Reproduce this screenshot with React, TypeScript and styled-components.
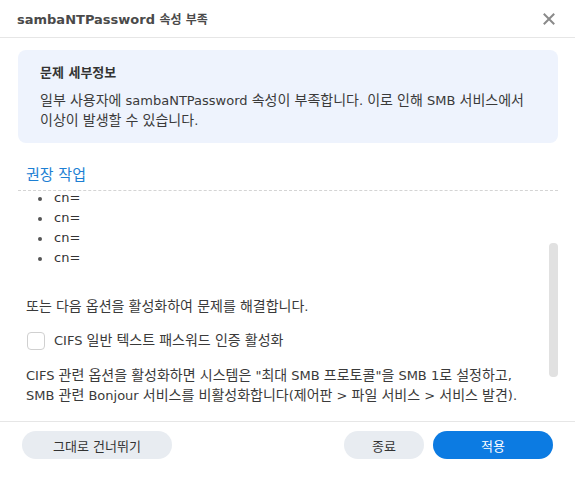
import type { FC, ReactNode } from 'react'
import styled, { createGlobalStyle } from 'styled-components'

const GlobalStyle = createGlobalStyle`
  html, body {
    margin: 0;
    padding: 0;
    background: #fff;
  }
  body {
    font-family: 'DejaVu Sans', 'Noto Sans CJK KR', sans-serif;
    font-size: 13px;
    color: #333;
  }
`

// hangul runs render a touch wider than latin in the original dialog font
const HANGUL = /([ㄱ-ㅎ가-힣]+)/

const ko = (text: string): ReactNode[] =>
  text.split(HANGUL).map((part, i) => (i % 2 === 1 ? <Ko key={i}>{part}</Ko> : part))

const entries = ['cn=', 'cn=', 'cn=', 'cn=']

const App: FC = () => {
  return (
    <>
      <GlobalStyle />
      <Dialog>
        <Header>
          <Title>
            sambaNTPassword <TitleKo>속성 부족</TitleKo>
          </Title>
          <CloseButton aria-label="close">
            <svg width="12" height="12" viewBox="0 0 12 12">
              <path d="M1.5 1.5 L10.5 10.5 M10.5 1.5 L1.5 10.5" stroke="#8a8a8a" strokeWidth="2" strokeLinecap="square" />
            </svg>
          </CloseButton>
        </Header>

        <Body>
          <InfoBox>
            <InfoTitle>문제 세부정보</InfoTitle>
            <InfoText>
              {ko('일부 사용자에 sambaNTPassword 속성이 부족합니다. 이로 인해 SMB 서비스에서')}
              <br />
              {ko('이상이 발생할 수 있습니다.')}
            </InfoText>
          </InfoBox>

          <SectionTitle>권장 작업</SectionTitle>

          <ScrollArea>
            <ScrollContent>
              <EntryList>
                {entries.map((entry, i) => (
                  <Entry key={i}>{entry}</Entry>
                ))}
              </EntryList>

              <Paragraph $top={29}>{ko('또는 다음 옵션을 활성화하여 문제를 해결합니다.')}</Paragraph>

              <CheckRow>
                <CheckBox type="checkbox" />
                <span>{ko('CIFS 일반 텍스트 패스워드 인증 활성화')}</span>
              </CheckRow>

              <Paragraph $top={15}>
                {ko('CIFS 관련 옵션을 활성화하면 시스템은 "최대 SMB 프로토콜"을 SMB 1로 설정하고,')}
                <br />
                {ko('SMB 관련 Bonjour 서비스를 비활성화합니다(제어판 > 파일 서비스 > 서비스 발견).')}
              </Paragraph>
            </ScrollContent>
            <ScrollThumb />
          </ScrollArea>
        </Body>

        <Footer>
          <Button $width={150}>그대로 건너뛰기</Button>
          <Spacer />
          <Button $width={80}>종료</Button>
          <Button $width={120} $primary>
            적용
          </Button>
        </Footer>
      </Dialog>
    </>
  )
}

const Dialog = styled.div`
  width: 575px;
  height: 477px;
  display: flex;
  flex-direction: column;
  background: #fff;
  overflow: hidden;
`

const Header = styled.div`
  height: 37px;
  flex-shrink: 0;
  display: flex;
  align-items: center;
  padding: 0 19px 0 17px;
  border-bottom: 1px solid #e6e6e6;
`

const Title = styled.div`
  flex: 1;
  font-weight: bold;
  font-size: 13px;
  color: #4a4a4a;
`

const TitleKo = styled.span`
  font-size: 12px;
`

const Ko = styled.span`
  font-size: 14px;
  line-height: 1;
`

const CloseButton = styled.div`
  width: 14px;
  height: 14px;
  display: flex;
  align-items: center;
  justify-content: center;
`

const Body = styled.div`
  flex: 1;
  min-height: 0;
  display: flex;
  flex-direction: column;
  padding: 12px 17px 0 18px;
`

const InfoBox = styled.div`
  background: #eef3fd;
  border-radius: 8px;
  padding: 13px 22px 12px;
  display: flex;
  flex-direction: column;
  gap: 8px;
`

const InfoTitle = styled.div`
  font-weight: bold;
  line-height: 20px;
  color: #333;
`

const InfoText = styled.div`
  line-height: 20px;
  color: #3a3a3a;
`

const SectionTitle = styled.div`
  margin-top: 21px;
  padding: 0 8px 4px;
  font-size: 15px;
  line-height: 22px;
  color: #1d7fd3;
  border-bottom: 1px dashed #d4d4d4;
`

const ScrollArea = styled.div`
  position: relative;
  height: 238px;
  overflow: hidden;
`

const ScrollContent = styled.div`
  margin-top: -3px;
  padding: 0 20px 0 8px;
  line-height: 20px;
`

const ScrollThumb = styled.div`
  position: absolute;
  right: 0;
  top: 52px;
  width: 9px;
  height: 134px;
  border-radius: 4px;
  background: #e1e1e1;
`

const EntryList = styled.ul`
  margin: 0;
  padding: 0 0 0 28px;
  list-style: none;
`

const Entry = styled.li`
  position: relative;
  line-height: 20px;

  &::before {
    content: '';
    position: absolute;
    left: -16px;
    top: 9px;
    width: 4px;
    height: 4px;
    border-radius: 50%;
    background: #555;
  }
`

const Paragraph = styled.div<{ $top: number }>`
  margin-top: ${({ $top }) => $top}px;
  line-height: 20px;
  color: #3a3a3a;
`

const CheckRow = styled.label`
  display: flex;
  align-items: center;
  gap: 9px;
  margin: 14px 0 0 1px;
  line-height: 20px;
  color: #3a3a3a;
`

const CheckBox = styled.input`
  appearance: none;
  margin: 0;
  width: 18px;
  height: 18px;
  border: 1px solid #d0d0d0;
  border-radius: 4px;
  background: #fff;
`

const Footer = styled.div`
  height: 46px;
  flex-shrink: 0;
  display: flex;
  align-items: flex-start;
  gap: 9px;
  padding: 9px 22px 0;
  border-top: 1px solid #e6e6e6;
`

const Spacer = styled.div`
  flex: 1;
`

const Button = styled.div<{ $width: number; $primary?: boolean }>`
  width: ${({ $width }) => $width}px;
  height: 28px;
  border-radius: 14px;
  display: flex;
  align-items: center;
  justify-content: center;
  font-size: 13px;
  color: ${({ $primary }) => ($primary ? '#fff' : '#333')};
  background: ${({ $primary }) => ($primary ? '#0c7be2' : '#e8ecf1')};
`

export default App
